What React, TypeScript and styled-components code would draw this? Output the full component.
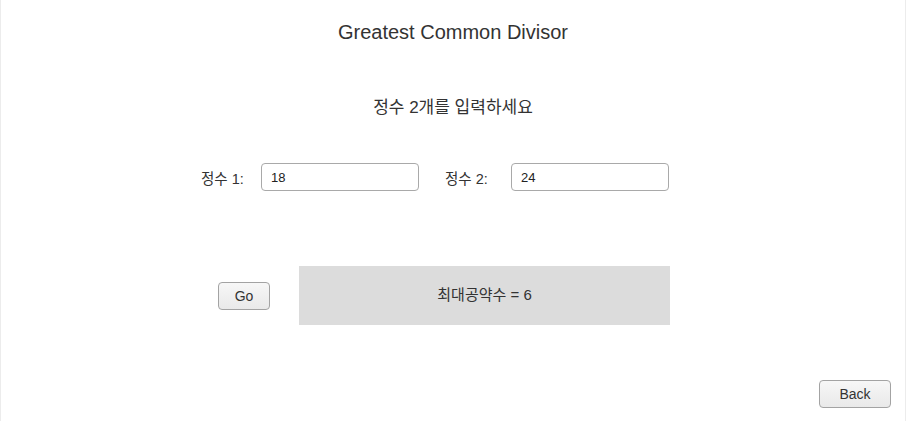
import React from "react";
import styled, { createGlobalStyle } from "styled-components";

const Global = createGlobalStyle`
  html, body { margin: 0; padding: 0; background: #fff; }
  * { box-sizing: border-box; }
  body { font-family: "Liberation Sans", Arial, "Noto Sans CJK KR", sans-serif; color: #333; }
`;

const Page = styled.div`
  width: 906px;
  height: 421px;
  border-left: 1px solid #ececec;
  border-right: 1px solid #ececec;
  display: flex;
  flex-direction: column;
  align-items: stretch;
`;

const Title = styled.h1`
  margin: 20px 0 0;
  font-size: 20px;
  font-weight: normal;
  line-height: 24px;
  text-align: center;
  color: #333;
`;

const Subtitle = styled.div`
  margin-top: 52px;
  font-size: 17px;
  line-height: 24px;
  text-align: center;
  color: #333;
`;

const InputRow = styled.div`
  margin-top: 43px;
  padding-left: 200px;
  display: flex;
  align-items: center;
  height: 28px;
`;

const Label = styled.label<{ $w: number; $lead?: number }>`
  width: ${(p) => p.$w}px;
  flex: none;
  font-size: 14.5px;
  color: #333;
  margin-left: ${(p) => p.$lead ?? 0}px;
  white-space: nowrap;
`;

const Field = styled.input`
  width: 158px;
  height: 28px;
  border: 1px solid #a9a9a9;
  border-radius: 4px;
  padding: 0 9px;
  font-family: "Liberation Sans", Arial, sans-serif;
  font-size: 13px;
  color: #222;
  background: #fff;
  outline: none;
`;

const ResultRow = styled.div`
  margin-top: 75px;
  padding-left: 217px;
  display: flex;
  align-items: center;
  gap: 29px;
`;

const Button = styled.button<{ $w: number }>`
  width: ${(p) => p.$w}px;
  height: 28px;
  border: 1px solid #a3a3a3;
  border-radius: 4px;
  background: linear-gradient(#f7f7f7, #e9e9e9);
  font-family: "Liberation Sans", Arial, sans-serif;
  font-size: 14px;
  color: #333;
  padding: 0;
  margin-top: 1px;
`;

const ResultBox = styled.div`
  width: 371px;
  height: 59px;
  background: #dcdcdc;
  display: flex;
  align-items: center;
  justify-content: center;
  font-size: 15px;
  line-height: 20px;
  padding-bottom: 2px;
  color: #333;
`;

const Footer = styled.div`
  margin-top: 54px;
  display: flex;
  justify-content: flex-end;
  padding-right: 14px;
`;

export default function App() {
  return (
    <>
      <Global />
      <Page>
        <Title>Greatest Common Divisor</Title>
        <Subtitle>정수 2개를 입력하세요</Subtitle>
        <InputRow>
          <Label $w={60}>정수 1:</Label>
          <Field defaultValue="18" />
          <Label $w={66} $lead={26}>정수 2:</Label>
          <Field defaultValue="24" />
        </InputRow>
        <ResultRow>
          <Button $w={52}>Go</Button>
          <ResultBox>최대공약수 = 6</ResultBox>
        </ResultRow>
        <Footer>
          <Button $w={72}>Back</Button>
        </Footer>
      </Page>
    </>
  );
}
